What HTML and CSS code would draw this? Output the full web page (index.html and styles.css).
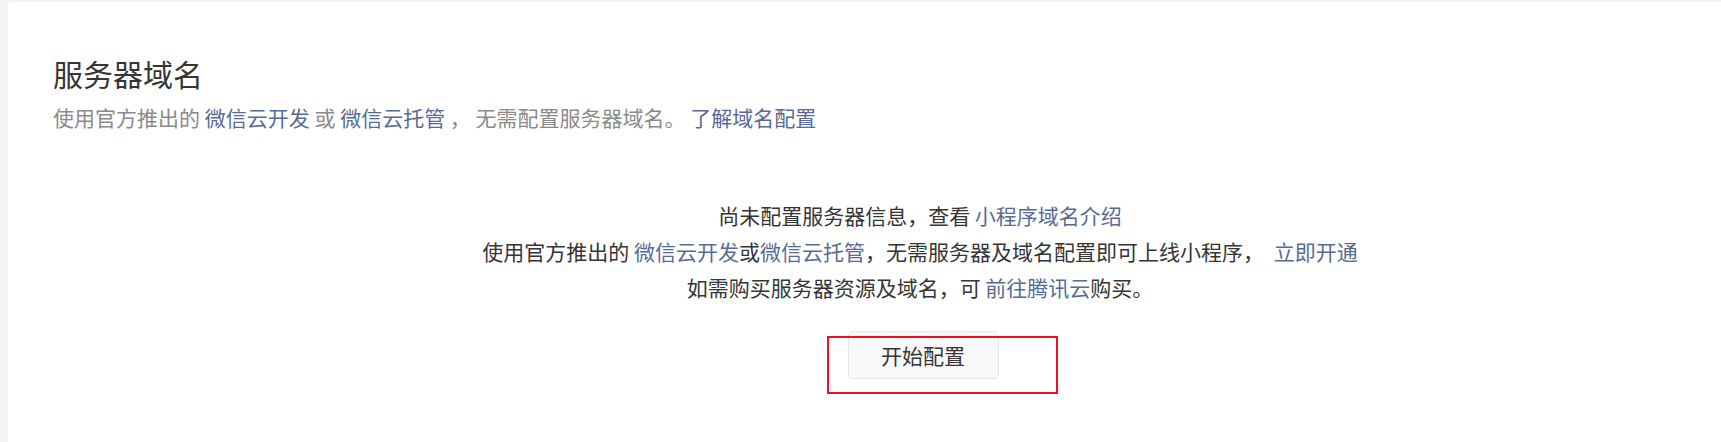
FILE: index.html
```html
<!DOCTYPE html>
<html lang="zh-CN">
<head>
<meta charset="utf-8">
<title>服务器域名</title>
<link rel="stylesheet" href="styles.css">
</head>
<body>
<div class="page">
  <section class="card">
    <h2 class="title">服务器域名</h2>
    <p class="desc">使用官方推出的 <a class="link" href="#">微信云开发</a> 或 <a class="link" href="#">微信云托管</a> ， 无需配置服务器域名。 <a class="link" href="#">了解域名配置</a></p>
    <div class="empty">
      <p class="empty-line">尚未配置服务器信息，查看 <a class="link" href="#">小程序域名介绍</a></p>
      <p class="empty-line">使用官方推出的 <a class="link" href="#">微信云开发</a>或<a class="link" href="#">微信云托管</a>，无需服务器及域名配置即可上线小程序， <a class="link link-gap" href="#">立即开通</a></p>
      <p class="empty-line">如需购买服务器资源及域名，可 <a class="link" href="#">前往腾讯云</a>购买。</p>
      <div class="btn-wrap">
        <button class="btn" type="button">开始配置</button>
        <span class="mark"></span>
      </div>
    </div>
  </section>
</div>
</body>
</html>
```

FILE: styles.css
```css
html, body {
  margin: 0;
  padding: 0;
}
body {
  background: #f4f5f7;
  font-family: "Noto Sans CJK SC", "Microsoft YaHei", sans-serif;
  color: #353535;
}
.page {
  padding: 2px 0 0 8px;
}
.card {
  height: 440px;
  box-sizing: border-box;
  background: #ffffff;
  border-radius: 4px 0 0 0;
  padding: 50px 45px 0 45px;
}
.title {
  margin: 0;
  font-size: 30px;
  font-weight: 400;
  line-height: 42px;
  color: #353535;
}
.desc {
  margin: 8px 0 0 0;
  font-size: 21px;
  line-height: 30px;
  color: #8a8a8a;
}
.link {
  color: #576b95;
  text-decoration: none;
}
.link-gap {
  margin-left: 5px;
}
.empty {
  margin-top: 65px;
  padding-left: 111px;
  display: flex;
  flex-direction: column;
  align-items: center;
}
.empty-line {
  margin: 0;
  font-size: 21px;
  line-height: 36px;
  color: #353535;
  text-align: center;
}
.btn-wrap {
  position: relative;
  margin-top: 26px;
  margin-left: 6px;
}
.btn {
  display: block;
  width: 151px;
  height: 48px;
  box-sizing: border-box;
  border: 1px solid #e4e6e9;
  border-radius: 5px;
  background: #f9f9f9;
  color: #353535;
  font-family: inherit;
  font-size: 21px;
  line-height: 46px;
  padding: 0;
  text-align: center;
}
.mark {
  position: absolute;
  left: -21px;
  top: 5px;
  width: 231px;
  height: 58px;
  box-sizing: border-box;
  border: 2px solid #e81123;
  pointer-events: none;
}
```
